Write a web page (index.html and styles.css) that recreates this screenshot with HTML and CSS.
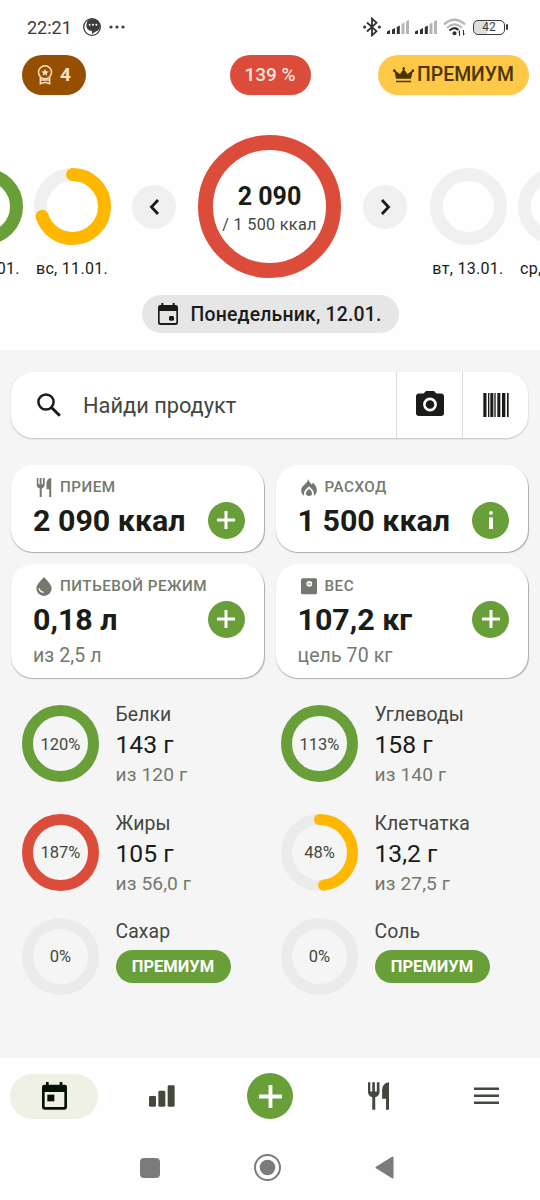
FILE: index.html
```html
<!DOCTYPE html>
<html lang="ru">
<head>
<meta charset="UTF-8" />
<meta name="viewport" content="width=device-width, initial-scale=1" />
<title>Дневник питания</title>
<link rel="stylesheet" href="styles.css">
</head>
<body>
  <!-- shared icons -->
  <svg class="defs" width="0" height="0">
    <symbol id="cutlery" viewBox="0 0 64 84">
      <path d="M0 0h7v28h6V0h8v28h6V0h8v30q0 12-13 16v38h-9V46Q0 42 0 30zM64 0v84h-9V50H43V24Q43 3 64 0z"/>
    </symbol>
    <symbol id="plus" viewBox="0 0 18 18">
      <path d="M7.500 0h3v7.500H18v3h-7.500V18h-3v-7.500H0v-3h7.500z"/>
    </symbol>
    <symbol id="signal" viewBox="0 0 22 14">
      <path d="M0 11.500L3 10v4H0zM5 9.500L8 8v6H5zM9.800 7l3-1.500V14h-3z"/>
      <path fill="#b5b5b5" d="M14.500 4l3-1.500V14h-3zM19 1.500L22 0v14h-3z"/>
    </symbol>
  </svg>

  <div class="app">
    <header class="status">
      <span class="time">22:21</span>
      <svg class="chat" width="18" height="18" viewBox="0 0 54 54">
        <circle cx="27" cy="27" r="25" fill="none" stroke="#3c3c3c" stroke-width="4"/>
        <path fill="#3c3c3c" d="M27 3C44 3 52 14 51 25 50 36 43 40 37 41L27 48V39C14 38 8 28 11 17 12 11 16 3 27 3z"/>
        <g fill="#fff"><circle cx="20" cy="20" r="3"/><circle cx="30" cy="20" r="3"/><circle cx="40" cy="20" r="3"/></g>
      </svg>
      <svg class="dots" width="16" height="4" viewBox="0 0 16 4" fill="#3c3c3c">
        <circle cx="2" cy="2" r="1.600"/><circle cx="8" cy="2" r="1.600"/><circle cx="14" cy="2" r="1.600"/>
      </svg>
      <div class="status-right">
        <svg width="18" height="20" viewBox="0 0 18 20">
          <path fill="none" stroke="#303030" stroke-width="1.800" d="M4 5.500l9.500 8.700L9 18.300V1.700l4.500 4.100L4 14.500"/>
          <circle cx="1.600" cy="10" r="1.500" fill="#303030"/><circle cx="16.400" cy="10" r="1.500" fill="#303030"/>
        </svg>
        <svg class="sig" width="22" height="14"><use href="#signal"/></svg>
        <svg class="sig" width="22" height="14"><use href="#signal"/></svg>
        <svg class="wifi" width="23" height="18" viewBox="0 0 23 18" fill="none" stroke-width="2.200">
          <path stroke="#b5b5b5" d="M1 6.500Q11.500-3 22 6.500M4 9.800Q11.500 3 19 9.800"/>
          <path stroke="#303030" d="M6.500 12.500Q11.500 8 15.500 12"/>
          <circle cx="11.500" cy="15.200" r="2" fill="#303030"/>
          <path fill="#303030" d="M15 14.500l2-2.500v6h-1v-3.500zM22 15.500L20 18v-6h1v3.500z"/>
        </svg>
        <span class="battery">42</span>
      </div>
    </header>

    <div class="top-row">
      <div class="pill streak">
        <svg width="16" height="20" viewBox="0 0 48 60">
          <g fill="none" stroke="#fbe3c4" stroke-width="4.500">
            <circle cx="24" cy="22" r="19.500"/>
            <path d="M10 37v19l14-4 14 4V37M11 45h26"/>
          </g>
          <path fill="#fbe3c4" d="M24 11l3.200 7.500 8 .7-6 5.200 1.800 7.900-7-4.200-7 4.200 1.800-7.900-6-5.200 8-.7z"/>
        </svg>
        <span>4</span>
      </div>
      <div class="pill percent">139 %</div>
      <div class="pill premium">
        <svg width="21" height="16" viewBox="0 0 63 48" fill="#4a3500">
          <path d="M9 35L5 15a4 4 0 1 1 3-3l13 9 9-13a4 4 0 1 1 4 0l9 13 13-9a4 4 0 1 1 3 3l-5 20zM9 41h45v5H9z"/>
        </svg>
        <span>ПРЕМИУМ</span>
      </div>
    </div>

    <div class="carousel">
      <div class="day">
        <svg class="ring" viewBox="0 0 77 77"><circle class="green" cx="38.500" cy="38.500" r="32"/></svg>
        <span>сб, 10.01.</span>
      </div>
      <div class="day">
        <svg class="ring" viewBox="0 0 77 77">
          <circle class="track" cx="38.500" cy="38.500" r="32"/>
          <circle class="yellow" cx="38.500" cy="38.500" r="32" pathLength="100" stroke-dasharray="70 100"/>
        </svg>
        <span>вс, 11.01.</span>
      </div>
      <button class="arrow prev"><svg width="11" height="16" viewBox="0 0 11 16"><path d="M9 1L2.500 8 9 15"/></svg></button>
      <div class="today">
        <b>2 090</b>
        <span>/ 1 500 ккал</span>
      </div>
      <button class="arrow next"><svg width="11" height="16" viewBox="0 0 11 16"><path d="M2 1L8.500 8 2 15"/></svg></button>
      <div class="day">
        <svg class="ring" viewBox="0 0 77 77"><circle class="track" cx="38.500" cy="38.500" r="32"/></svg>
        <span>вт, 13.01.</span>
      </div>
      <div class="day">
        <svg class="ring" viewBox="0 0 77 77"><circle class="track" cx="38.500" cy="38.500" r="32"/></svg>
        <span>ср, 14.01.</span>
      </div>
    </div>

    <div class="date-pill">
      <svg width="20" height="22" viewBox="0 0 60 66">
        <path fill="#1a1c18" fill-rule="evenodd" d="M10 0h6v6h28V0h6v6h3q7 0 7 7v46q0 7-7 7H7q-7 0-7-7V13q0-7 7-7h3zM5 24v34q0 2 2 2h46q2 0 2-2V24z"/>
        <rect x="33" y="39" width="15" height="14" rx="4" fill="#1a1c18"/>
      </svg>
      <span>Понедельник, 12.01.</span>
    </div>

    <main>
      <div class="search">
        <div class="search-field">
          <svg width="24" height="24" viewBox="0 0 24 24" fill="none" stroke="#1a1c18" stroke-width="2.500">
            <circle cx="9" cy="9" r="7.600"/><path stroke-width="3" d="M14.500 14.500l8.300 8.300"/>
          </svg>
          <span>Найди продукт</span>
        </div>
        <div class="search-btn">
          <svg width="28" height="26" viewBox="0 0 28 26">
            <path fill="#1a1c18" d="M10 0h8l2.500 2.500H25q3 0 3 3V22q0 3-3 3H3q-3 0-3-3V5.500q0-3 3-3h4.500z"/>
            <circle cx="14" cy="13.500" r="5.600" fill="#1a1c18" stroke="#fff" stroke-width="2.600"/>
          </svg>
        </div>
        <div class="search-btn barcode">
          <svg width="26" height="24" viewBox="0 0 78 72" fill="#1a1c18">
            <path d="M1 0h8v72H1zM15 0h4v72h-4zM22 0h8v72h-8zM34 0h4v72h-4zM43 0h8v72h-8zM57 0h9v72h-9zM72 0h5v72h-5z"/>
            <path fill="#8a8b88" d="M9 0h3v72H9zM30 0h2v72h-2zM51 0h2v72h-2zM66 0h2v72h-2z"/>
          </svg>
        </div>
      </div>

      <div class="cards">
        <div class="card">
          <div class="label"><svg width="16" height="19"><use href="#cutlery"/></svg>ПРИЕМ</div>
          <div class="value"><b>2 090 ккал</b><button class="round"><svg width="18" height="18"><use href="#plus"/></svg></button></div>
        </div>
        <div class="card">
          <div class="label">
            <svg width="16" height="17" viewBox="0 0 46 50">
              <path d="M20 0C22 8 28 11 31 16L35 11C42 18 46 25 46 33 46 42 42 47 37 49 40 38 34 31 23 22 12 31 6 38 9 49 4 47 0 42 0 33 0 25 5 21 10 16 15 11 20 7 20 0z"/>
              <path d="M23 29Q32 36 32 42a9 8 0 0 1-18 0Q14 36 23 29z"/>
            </svg>РАСХОД</div>
          <div class="value"><b>1 500 ккал</b><button class="round"><svg width="6" height="18" viewBox="0 0 6 18"><circle cx="3" cy="1.900" r="1.900"/><path d="M1 6.500h4V18H1z"/></svg></button></div>
        </div>
        <div class="card">
          <div class="label">
            <svg width="16" height="19" viewBox="0 0 46 54">
              <path d="M23 0C31 9 45 22 45 33A22 21 0 0 1 1 33C1 22 15 9 23 0z"/>
              <path fill="none" stroke="#fff" stroke-width="4" d="M9 32Q10 42 22 44"/>
            </svg>ПИТЬЕВОЙ РЕЖИМ</div>
          <div class="value"><b>0,18 л</b><button class="round"><svg width="18" height="18"><use href="#plus"/></svg></button></div>
          <div class="sub">из 2,5 л</div>
        </div>
        <div class="card">
          <div class="label">
            <svg width="16" height="17" viewBox="0 0 50 51">
              <rect width="50" height="50" rx="5"/><circle cx="26" cy="17" r="9" fill="#fff"/><path d="M21 16h10v3H21z"/>
            </svg>ВЕС</div>
          <div class="value"><b>107,2 кг</b><button class="round"><svg width="18" height="18"><use href="#plus"/></svg></button></div>
          <div class="sub">цель 70 кг</div>
        </div>
      </div>

      <div class="macros">
        <div class="macro">
          <div class="gauge">
            <svg class="ring thin" viewBox="0 0 77 77"><circle class="green" cx="38.500" cy="38.500" r="33"/></svg>
            <span>120%</span>
          </div>
          <div class="info"><div class="name">Белки</div><div class="amount">143 г</div><div class="goal">из 120 г</div></div>
        </div>
        <div class="macro">
          <div class="gauge">
            <svg class="ring thin" viewBox="0 0 77 77"><circle class="green" cx="38.500" cy="38.500" r="33"/></svg>
            <span>113%</span>
          </div>
          <div class="info"><div class="name">Углеводы</div><div class="amount">158 г</div><div class="goal">из 140 г</div></div>
        </div>
        <div class="macro">
          <div class="gauge">
            <svg class="ring thin" viewBox="0 0 77 77"><circle class="red" cx="38.500" cy="38.500" r="33"/></svg>
            <span>187%</span>
          </div>
          <div class="info"><div class="name">Жиры</div><div class="amount">105 г</div><div class="goal">из 56,0 г</div></div>
        </div>
        <div class="macro">
          <div class="gauge">
            <svg class="ring thin" viewBox="0 0 77 77">
              <circle class="track" cx="38.500" cy="38.500" r="33"/>
              <circle class="yellow" cx="38.500" cy="38.500" r="33" pathLength="100" stroke-dasharray="48 100"/>
            </svg>
            <span>48%</span>
          </div>
          <div class="info"><div class="name">Клетчатка</div><div class="amount">13,2 г</div><div class="goal">из 27,5 г</div></div>
        </div>
        <div class="macro locked">
          <div class="gauge">
            <svg class="ring thin" viewBox="0 0 77 77"><circle class="track" cx="38.500" cy="38.500" r="33"/></svg>
            <span>0%</span>
          </div>
          <div class="info"><div class="name">Сахар</div><button class="unlock">ПРЕМИУМ</button></div>
        </div>
        <div class="macro locked">
          <div class="gauge">
            <svg class="ring thin" viewBox="0 0 77 77"><circle class="track" cx="38.500" cy="38.500" r="33"/></svg>
            <span>0%</span>
          </div>
          <div class="info"><div class="name">Соль</div><button class="unlock">ПРЕМИУМ</button></div>
        </div>
      </div>
    </main>

    <nav class="tabs">
      <a class="tab active">
        <svg width="25" height="28" viewBox="0 0 75 84">
          <path fill="#071206" fill-rule="evenodd" d="M12 0h8v8h33V0h8v8h7q7 0 7 7v61q0 7-7 7H7q-7 0-7-7V15q0-7 7-7h5zM8 30v43q0 2 2 2h55q2 0 2-2V30z"/>
          <path fill="#071206" d="M16 38h21v20H16z"/>
        </svg>
      </a>
      <a class="tab">
        <svg width="26" height="22" viewBox="0 0 78 66" fill="#414a3a">
          <rect x="0" y="33" width="21" height="32" rx="4"/><rect x="28" y="17" width="21" height="48" rx="4"/><rect x="56" y="1" width="21" height="64" rx="4"/>
        </svg>
      </a>
      <a class="tab"><span class="add"><svg width="23" height="23"><use href="#plus"/></svg></span></a>
      <a class="tab"><svg width="21" height="28" fill="#43483e"><use href="#cutlery"/></svg></a>
      <a class="tab">
        <svg width="25" height="18" viewBox="0 0 25 18" fill="#43483e"><path d="M0 .500h25V3H0zM0 7.500h25V10H0zM0 14.500h25V17H0z"/></svg>
      </a>
    </nav>

    <div class="system">
      <svg width="20" height="20"><rect width="20" height="20" rx="4" fill="#7b7b7b"/></svg>
      <svg width="27" height="27"><circle cx="13.500" cy="13.500" r="12.500" fill="none" stroke="#7b7b7b" stroke-width="2"/><circle cx="13.500" cy="13.500" r="7.800" fill="#7b7b7b"/></svg>
      <svg width="19" height="23" viewBox="0 0 19 23"><path fill="#7b7b7b" stroke="#7b7b7b" stroke-width="2" stroke-linejoin="round" d="M1.500 11.500L17.500 1.500v20z"/></svg>
    </div>
  </div>
</body>
</html>
```
FILE: styles.css
```css
* {
  box-sizing: border-box;
}
body {
  margin: 0;
  font-family: Roboto, Arial, sans-serif;
  background: #fefefe;
  color: #1a1c18;
}
svg {
  display: block;
  flex: none;
}
.defs {
  display: none;
}
button {
  font-family: inherit;
  border: none;
  padding: 0;
  cursor: pointer;
}
.app {
  width: 540px;
  height: 1200px;
  overflow: hidden;
  display: flex;
  flex-direction: column;
}

/* status bar */
.status {
  height: 55px;
  padding: 0 31px 1px 27px;
  display: flex;
  align-items: center;
  color: #3c3c3c;
}
.time {
  font-size: 18px;
  width: 56px;
}
.dots {
  margin-left: 8px;
}
.status-right {
  margin-left: auto;
  display: flex;
  align-items: center;
  gap: 6px;
}
.sig {
  fill: #303030;
}
.wifi {
  margin-right: 1px;
}
.battery {
  position: relative;
  width: 32px;
  height: 15px;
  margin-right: 4px;
  border: 1.5px solid #3c3c3c;
  border-radius: 5px;
  background: linear-gradient(90deg, #dedede 42%, #fff 42%);
  font-size: 12px;
  line-height: 13px;
  text-align: center;
}
.battery::after {
  content: "";
  position: absolute;
  right: -4px;
  top: 3px;
  width: 2px;
  height: 6px;
  border-radius: 1px;
  background: #3c3c3c;
}

/* top pills */
.top-row {
  display: grid;
  grid-template-columns: 1fr auto 1fr;
  padding: 0 11px 0 22px;
  height: 40px;
}
.pill {
  height: 39.5px;
  border-radius: 20px;
  display: flex;
  align-items: center;
  justify-content: center;
  font-size: 19px;
  font-weight: 500;
}
.streak {
  width: 64px;
  gap: 7px;
  background: #964f00;
  color: #fbe3c4;
  font-weight: 700;
}
.percent {
  width: 81px;
  margin-right: 11px;
  background: #dc4c3a;
  color: #ffe4df;
}
.premium {
  justify-self: end;
  width: 151px;
  gap: 3px;
  font-size: 19.4px;
  background: #ffc846;
  color: #4a3500;
}

/* day carousel */
.carousel {
  display: flex;
  justify-content: center;
  height: 153px;
  margin-top: 40px;
}
.day {
  flex: none;
  width: 88px;
  padding-top: 33px;
  display: flex;
  flex-direction: column;
  align-items: center;
  font-size: 16px;
  letter-spacing: 0.3px;
  white-space: nowrap;
}
.day span {
  margin-top: 14px;
  line-height: 20px;
}
.ring {
  width: 77px;
  height: 77px;
  fill: none;
  stroke-width: 13px;
  transform: rotate(-90deg);
}
.ring.thin {
  stroke-width: 11px;
}
.green { stroke: #689f38; }
.red { stroke: #dc4c3a; }
.track { stroke: #f0f0f0; }
.yellow {
  stroke: #ffb700;
  stroke-linecap: round;
}
.thin .track {
  stroke: #ebebeb;
}
.arrow {
  flex: none;
  width: 44px;
  height: 44px;
  margin-top: 49.5px;
  border-radius: 50%;
  background: #f0f0f0;
  display: flex;
  align-items: center;
  justify-content: center;
}
.arrow path {
  fill: none;
  stroke: #1a1c18;
  stroke-width: 2.8;
}
.prev { margin-left: 16px; }
.next { margin-right: 17px; }
.today {
  flex: none;
  width: 143px;
  height: 143px;
  margin: 0 22px;
  padding-top: 8px;
  border: 15px solid #dc4c3a;
  border-radius: 50%;
  display: flex;
  flex-direction: column;
  align-items: center;
  justify-content: center;
  white-space: nowrap;
}
.today b {
  font-size: 25px;
  line-height: 28px;
}
.today span {
  font-size: 16.2px;
  line-height: 27px;
  letter-spacing: 0.3px;
  color: #43483e;
}
.date-pill {
  align-self: center;
  width: 257px;
  height: 38px;
  margin-top: 7px;
  border-radius: 19px;
  background: #e6e6e6;
  display: flex;
  align-items: center;
  justify-content: center;
  gap: 12px;
  font-size: 19.4px;
  font-weight: 500;
  letter-spacing: 0.2px;
}

main {
  height: 708px;
  margin-top: 17px;
  padding: 22px 12px 0 11px;
  background: #f5f5f5;
}
.search {
  display: flex;
  height: 66px;
  border-radius: 22px;
  background: #fff;
  box-shadow: 0 1px 2px rgba(0,0,0,0.22);
}
.search-field {
  flex: 1;
  display: flex;
  align-items: center;
  padding-left: 26px;
  gap: 22px;
  font-size: 21.8px;
  color: #43483e;
}
.search-btn {
  width: 66px;
  padding-bottom: 2px;
  border-left: 1px solid #dcdcdc;
  display: flex;
  align-items: center;
  justify-content: center;
}
.barcode {
  padding-bottom: 0;
}

/* summary cards */
.cards {
  display: grid;
  grid-template-columns: 1fr 1fr;
  grid-template-rows: 87px 114px;
  gap: 12px;
  margin-top: 27px;
}
.card {
  padding: 12px 19px 0 22px;
  border-radius: 22px;
  background: #fff;
  box-shadow: 0.5px 1px 1px rgba(0,0,0,0.3);
}
.label {
  height: 20px;
  display: flex;
  align-items: center;
  gap: 8px;
  padding-left: 3px;
  font-size: 15.2px;
  font-weight: 500;
  letter-spacing: 0.5px;
  color: #74796d;
}
.label svg {
  fill: #74796d;
}
.value {
  height: 36px;
  margin-top: 5px;
  display: flex;
  align-items: center;
  justify-content: space-between;
  font-size: 30.4px;
}
.round {
  width: 37px;
  height: 37px;
  border-radius: 50%;
  background: #689f38;
  display: flex;
  align-items: center;
  justify-content: center;
}
.round svg,
.add svg {
  fill: #fff;
}
.sub {
  margin-top: 7px;
  font-size: 19.5px;
  line-height: 24px;
  letter-spacing: 0.1px;
  color: #74796d;
}

/* macros */
.macros {
  display: grid;
  grid-template-columns: 259px 1fr;
  grid-auto-rows: 90px;
  row-gap: 18.5px;
  padding-left: 11px;
  margin-top: 22px;
}
.macro {
  display: flex;
  align-items: flex-start;
  gap: 16.5px;
}
.gauge {
  display: grid;
  place-items: center;
  margin-top: 5px;
}
.gauge > * {
  grid-area: 1 / 1;
}
.gauge span {
  padding-top: 1px;
  font-size: 16.5px;
  color: #43483e;
}
.locked .gauge {
  margin-top: 0.5px;
}
.info {
  line-height: 30px;
}
.name {
  font-size: 19.4px;
  letter-spacing: 0.1px;
  color: #43483e;
}
.amount {
  font-size: 24.7px;
}
.goal {
  font-size: 19.2px;
  letter-spacing: 0.1px;
  color: #74796d;
}
.unlock {
  display: block;
  width: 115px;
  height: 33px;
  margin-top: 2.5px;
  padding-top: 1px;
  border-radius: 17px;
  background: #689f38;
  color: #fff;
  font-size: 16.5px;
  font-weight: 700;
}

/* bottom navigation */
.tabs {
  display: flex;
  justify-content: space-between;
  align-items: center;
  height: 77px;
  padding: 0 10px 1px;
}
.tab {
  width: 88px;
  height: 45px;
  border-radius: 23px;
  display: flex;
  align-items: center;
  justify-content: center;
}
.tab.active {
  padding-bottom: 1px;
  background: #eff1e5;
}
.add {
  width: 46px;
  height: 46px;
  border-radius: 50%;
  background: #689f38;
  display: flex;
  align-items: center;
  justify-content: center;
}
.system {
  flex: 1;
  display: flex;
  justify-content: space-between;
  align-items: center;
  padding: 0 146px 0 140px;
}
```
